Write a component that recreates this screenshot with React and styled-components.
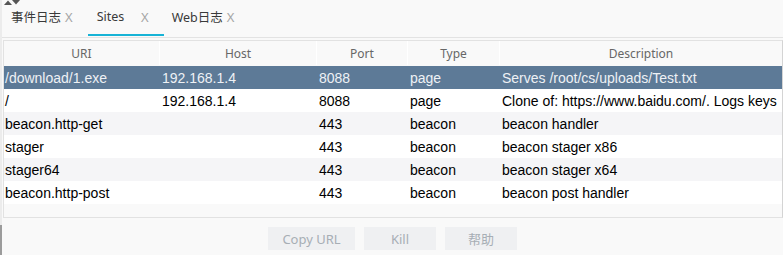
import styled, { createGlobalStyle } from "styled-components";

const GlobalStyle = createGlobalStyle`
  body {
    margin: 0;
    background: #f9f9f9;
  }
`;

const Page = styled.div`
  width: 783px;
  height: 255px;
  display: flex;
  background: #f9f9f9;
  overflow: hidden;
`;

const Splitter = styled.div`
  width: 2px;
  flex: none;
  background: linear-gradient(#ececec 0, #ececec 225px, #9c9c9c 225px);
`;

const Main = styled.div`
  flex: 1;
  display: flex;
  flex-direction: column;
  min-width: 0;
`;

const TabBar = styled.div`
  position: relative;
  height: 37px;
  display: flex;
  align-items: stretch;
  border-bottom: 1px solid #e3e3e3;
`;

const Arrows = styled.svg`
  position: absolute;
  left: 1px;
  top: 0;
`;

const Tab = styled.div`
  display: flex;
  align-items: center;
  justify-content: space-between;
  gap: 4px;
  padding: 0 15px 1px ${(p) => p.$pl || 10}px;
  font-family: "Noto Sans", "Noto Sans CJK SC", sans-serif;
  font-size: 12.5px;
  color: #3a3a3a;
  border-bottom: 2px solid ${(p) => (p.$active ? "#17b3d6" : "transparent")};
  margin-bottom: 1px;
  box-sizing: border-box;
  ${(p) => p.$active && "min-width: 76px;"}
`;

const Close = styled.span`
  color: #a6a6a6;
  font-size: 13px;
`;

const Table = styled.div`
  margin: 2px 0 0 1px;
  height: 178px;
  border: 1px solid #e2e2e2;
  border-right-color: #d4d4d4;
  background: #f9f9f9;
  box-sizing: border-box;
  overflow: hidden;
`;

const cols = "156px 157px 91px 92px 1fr";

const HeaderRow = styled.div`
  display: grid;
  grid-template-columns: ${cols};
  height: 24px;
  margin-bottom: 1px;
`;

const HeaderCell = styled.div`
  display: flex;
  align-items: center;
  justify-content: center;
  font-family: "Noto Sans", sans-serif;
  font-size: 12px;
  color: #676767;
  border-right: 1px solid #ffffff;
  &:last-child {
    border-right: none;
  }
`;

const Row = styled.div`
  display: grid;
  grid-template-columns: ${cols};
  height: 23px;
  background: ${(p) =>
    p.$selected ? "#5d7a97" : p.$odd ? "#f5f5f7" : "#ffffff"};
  color: ${(p) => (p.$selected ? "#eef1f5" : "#000000")};
`;

const Cell = styled.div`
  display: flex;
  align-items: center;
  padding-left: ${(p) => p.$pl ?? 1}px;
  font-family: "Liberation Sans", Arial, sans-serif;
  font-size: 14px;
  white-space: nowrap;
  overflow: hidden;
`;

const ButtonBar = styled.div`
  flex: 1;
  display: flex;
  justify-content: center;
  align-items: flex-start;
  padding-top: 9px;
  gap: 9px;
`;

const Button = styled.button`
  width: ${(p) => p.$w || 72}px;
  height: 23px;
  border: none;
  background: #eff0f2;
  color: #a7aeb5;
  font-family: "Noto Sans", "Noto Sans CJK SC", sans-serif;
  font-size: 13px;
  padding: 0;
  cursor: default;
`;

const columns = ["URI", "Host", "Port", "Type", "Description"];

const sites = [
  ["/download/1.exe", "192.168.1.4", "8088", "page", "Serves /root/cs/uploads/Test.txt"],
  ["/", "192.168.1.4", "8088", "page", "Clone of: https://www.baidu.com/. Logs keys"],
  ["beacon.http-get", "", "443", "beacon", "beacon handler"],
  ["stager", "", "443", "beacon", "beacon stager x86"],
  ["stager64", "", "443", "beacon", "beacon stager x64"],
  ["beacon.http-post", "", "443", "beacon", "beacon post handler"],
];

const App = () => {
  return (
    <Page>
      <GlobalStyle />
      <Splitter />
      <Main>
        <TabBar>
          <Arrows width="20" height="6" viewBox="0 0 20 6">
            <path d="M1 5 L5 0.5 L9 5 Z" fill="#555" />
            <path d="M9 0 L13 4.5 L17 0 Z" fill="#555" />
          </Arrows>
          <Tab $pl={9}>
            <span>事件日志</span>
            <Close>X</Close>
          </Tab>
          <Tab $active $pl={9}>
            <span>Sites</span>
            <Close>X</Close>
          </Tab>
          <Tab $pl={8}>
            <span>Web日志</span>
            <Close>X</Close>
          </Tab>
        </TabBar>
        <Table>
          <HeaderRow>
            {columns.map((c) => (
              <HeaderCell key={c}>{c}</HeaderCell>
            ))}
          </HeaderRow>
          {sites.map((s, i) => (
            <Row key={i} $selected={i === 0} $odd={i % 2 === 0}>
              {s.map((v, j) => (
                <Cell key={j} $pl={j === 0 ? 1 : 2}>
                  {v}
                </Cell>
              ))}
            </Row>
          ))}
        </Table>
        <ButtonBar>
          <Button $w={87}>Copy URL</Button>
          <Button>Kill</Button>
          <Button>帮助</Button>
        </ButtonBar>
      </Main>
    </Page>
  );
};

export default App;
